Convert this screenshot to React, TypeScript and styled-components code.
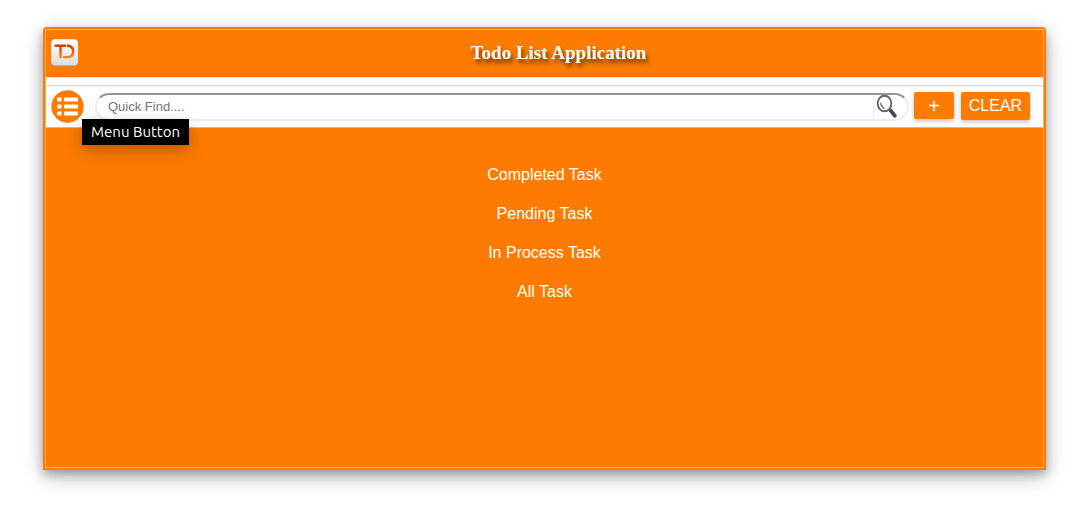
import React from "react";
import styled, { createGlobalStyle } from "styled-components";

const GlobalStyle = createGlobalStyle`
  *, *::before, *::after { box-sizing: border-box; }
  body {
    margin: 0;
    background: #fff;
    font-family: "Liberation Sans", Arial, sans-serif;
    font-size: 16px;
  }
`;

const orange = "#fd7b00";

const Page = styled.div`
  padding: 27px 44px 36px 43px;
`;

const Card = styled.main`
  border: 2px solid ${orange};
  border-radius: 4px 4px 0 0;
  background: ${orange};
  box-shadow: 0 4px 8px rgba(0, 0, 0, 0.2), 0 6px 20px rgba(0, 0, 0, 0.3);
`;

const Frame = styled.div`
  display: flex;
  flex-direction: column;
  min-height: 439px;
  border: 1px solid #ffb066;
`;

const Header = styled.header`
  display: grid;
  grid-template-columns: 28px 1fr;
  align-items: center;
  height: 47px;
  padding: 0 5px 2px;
`;

const Title = styled.h1`
  margin: 0;
  color: #fff;
  font: bold 19px/24px "Liberation Serif", "Times New Roman", serif;
  text-align: center;
  text-shadow: 2px 4px 4px rgba(0, 0, 0, 0.6);
`;

const Strip = styled.div`
  height: 9px;
  background: #fff;
  border-top: 1px solid #ffd9b3;
  border-bottom: 1px solid #dcdcdc;
`;

const Toolbar = styled.div`
  display: flex;
  align-items: flex-start;
  height: 41px;
  padding: 3px 13px 0 5px;
  background: #fff;
  border-top: 1px solid #f0f0f0;
`;

const MenuWrap = styled.div`
  position: relative;
  width: 44px;
  flex: none;
`;

const MenuButton = styled.button`
  display: block;
  width: 33px;
  height: 33px;
  padding: 0;
  border: 0;
  border-radius: 50%;
  background: none;
  cursor: pointer;
`;

const Tooltip = styled.span`
  position: absolute;
  top: 29px;
  left: 31px;
  z-index: 1;
  padding: 0 9px;
  background: #000;
  color: #fff;
  font: 15px/26px Ubuntu, "Noto Sans", sans-serif;
  white-space: nowrap;
  box-shadow: 0 4px 8px rgba(0, 0, 0, 0.1), 0 6px 20px rgba(0, 0, 0, 0.19);
`;

const SearchForm = styled.form`
  display: flex;
  flex: 1;
  height: 28px;
  margin: 3px 5px 0 0;
  border: 2px solid #eee;
  border-top-color: #969696;
  border-radius: 14px;
  overflow: hidden;
`;

const SearchInput = styled.input`
  flex: 1;
  min-width: 0;
  padding: 0 11px;
  border: 0;
  outline: 0;
  background: transparent;
  font: 13px/24px "Liberation Sans", Arial, sans-serif;
  &::placeholder { color: #757575; opacity: 1; }
`;

const SearchButton = styled.button`
  width: 34px;
  padding: 0 0 0 2px;
  border: 0;
  border-left: 1px solid #eee;
  background: none;
  text-align: left;
  line-height: 0;
  cursor: pointer;
`;

const ActionButton = styled.button<{ $wide?: boolean }>`
  flex: none;
  width: ${(p) => (p.$wide ? 69 : 40)}px;
  height: ${(p) => (p.$wide ? 28 : 27)}px;
  margin: 2px 0 0 ${(p) => (p.$wide ? 7 : 0)}px;
  padding: 0;
  border: 0;
  border-radius: 2px;
  background: ${orange};
  color: #fff;
  font: ${(p) => (p.$wide ? 16 : 20)}px/26px "Liberation Sans", Arial, sans-serif;
  box-shadow: 0 2px 4px rgba(0, 0, 0, 0.25);
  cursor: pointer;
`;

const TaskNav = styled.nav`
  display: flex;
  flex: 1;
  flex-direction: column;
  align-items: center;
  gap: 21px;
  padding: 38px 0;
  border-top: 1px solid #ffb066;
`;

const TaskLink = styled.a`
  color: #fff;
  line-height: 18px;
  text-decoration: none;
`;

const tasks = ["Completed Task", "Pending Task", "In Process Task", "All Task"];

const Logo = () => (
  <svg width="28" height="28" viewBox="0 0 28 28" aria-hidden="true">
    <defs>
      <linearGradient id="tile" x1="0" y1="0" x2="0" y2="1">
        <stop offset="0" stopColor="#fff" />
        <stop offset="1" stopColor="#dcdde0" />
      </linearGradient>
      <linearGradient id="mark" x1="0" y1="0" x2="0" y2="1">
        <stop offset="0" stopColor="#c43c08" />
        <stop offset="0.6" stopColor="#f06a08" />
        <stop offset="1" stopColor="#ff8c1c" />
      </linearGradient>
    </defs>
    <rect x="0.2" y="0.8" width="26.8" height="26.4" rx="4" fill="#b98450" />
    <rect x="0.2" y="0.2" width="26.8" height="26.2" rx="4" fill="url(#tile)" />
    <path d="M3.7 5.6H15v2.3h-4.2v11.3H8.3V7.9H3.7z M15.9 5.6c5 0 7.5 2.2 7.5 6.8 0 4.6-2.6 6.8-7.1 6.8h-4.2V17h4.2c3 0 4.6-1.5 4.6-4.6 0-3-1.8-4.5-5-4.5z" fill="url(#mark)" />
  </svg>
);

const ListIcon = () => (
  <svg width="33" height="33" viewBox="0 0 33 33" aria-hidden="true">
    <circle cx="16.5" cy="16.5" r="16.2" fill={orange} />
    <g fill="#fff">
      {[7.5, 14.5, 21.5].map((y) => (
        <g key={y}>
          <rect x="6.3" y={y} width="4.2" height="4" rx="0.7" />
          <rect x="13" y={y} width="14" height="4" rx="0.7" />
        </g>
      ))}
    </g>
  </svg>
);

const Magnifier = () => (
  <svg width="22" height="24" viewBox="0 0 22 24" aria-hidden="true">
    <path d="M12.3 15.4l2.8-2.2 5.6 6.9c.8 1.4-1.9 3.5-3 2.4z" fill="#4a4a4a" />
    <ellipse cx="8.5" cy="8.5" rx="6.8" ry="7.8" fill="#fff" stroke="#666" strokeWidth="1.9" />
    <path d="M4.3 7.5c.1 3.3 1.8 5.6 4.4 6.2-1.6-1.4-2.6-3.2-4.4-6.2z" fill="#777" stroke="#777" strokeWidth="0.8" />
  </svg>
);

export default function App() {
  return (
    <>
      <GlobalStyle />
      <Page>
        <Card>
          <Frame>
            <Header>
              <Logo />
              <Title>Todo List Application</Title>
            </Header>
            <Strip />
            <Toolbar>
              <MenuWrap>
                <MenuButton type="button" aria-label="Menu" aria-describedby="menu-tip">
                  <ListIcon />
                </MenuButton>
                <Tooltip id="menu-tip" role="tooltip">Menu Button</Tooltip>
              </MenuWrap>
              <SearchForm role="search" onSubmit={(e) => e.preventDefault()}>
                <SearchInput type="text" aria-label="Quick find" placeholder="Quick Find...." />
                <SearchButton type="submit" aria-label="Search">
                  <Magnifier />
                </SearchButton>
              </SearchForm>
              <ActionButton type="button" aria-label="Add task">+</ActionButton>
              <ActionButton type="button" $wide>CLEAR</ActionButton>
            </Toolbar>
            <TaskNav aria-label="Task filters">
              {tasks.map((task) => (
                <TaskLink href="#" key={task}>{task}</TaskLink>
              ))}
            </TaskNav>
          </Frame>
        </Card>
      </Page>
    </>
  );
}
